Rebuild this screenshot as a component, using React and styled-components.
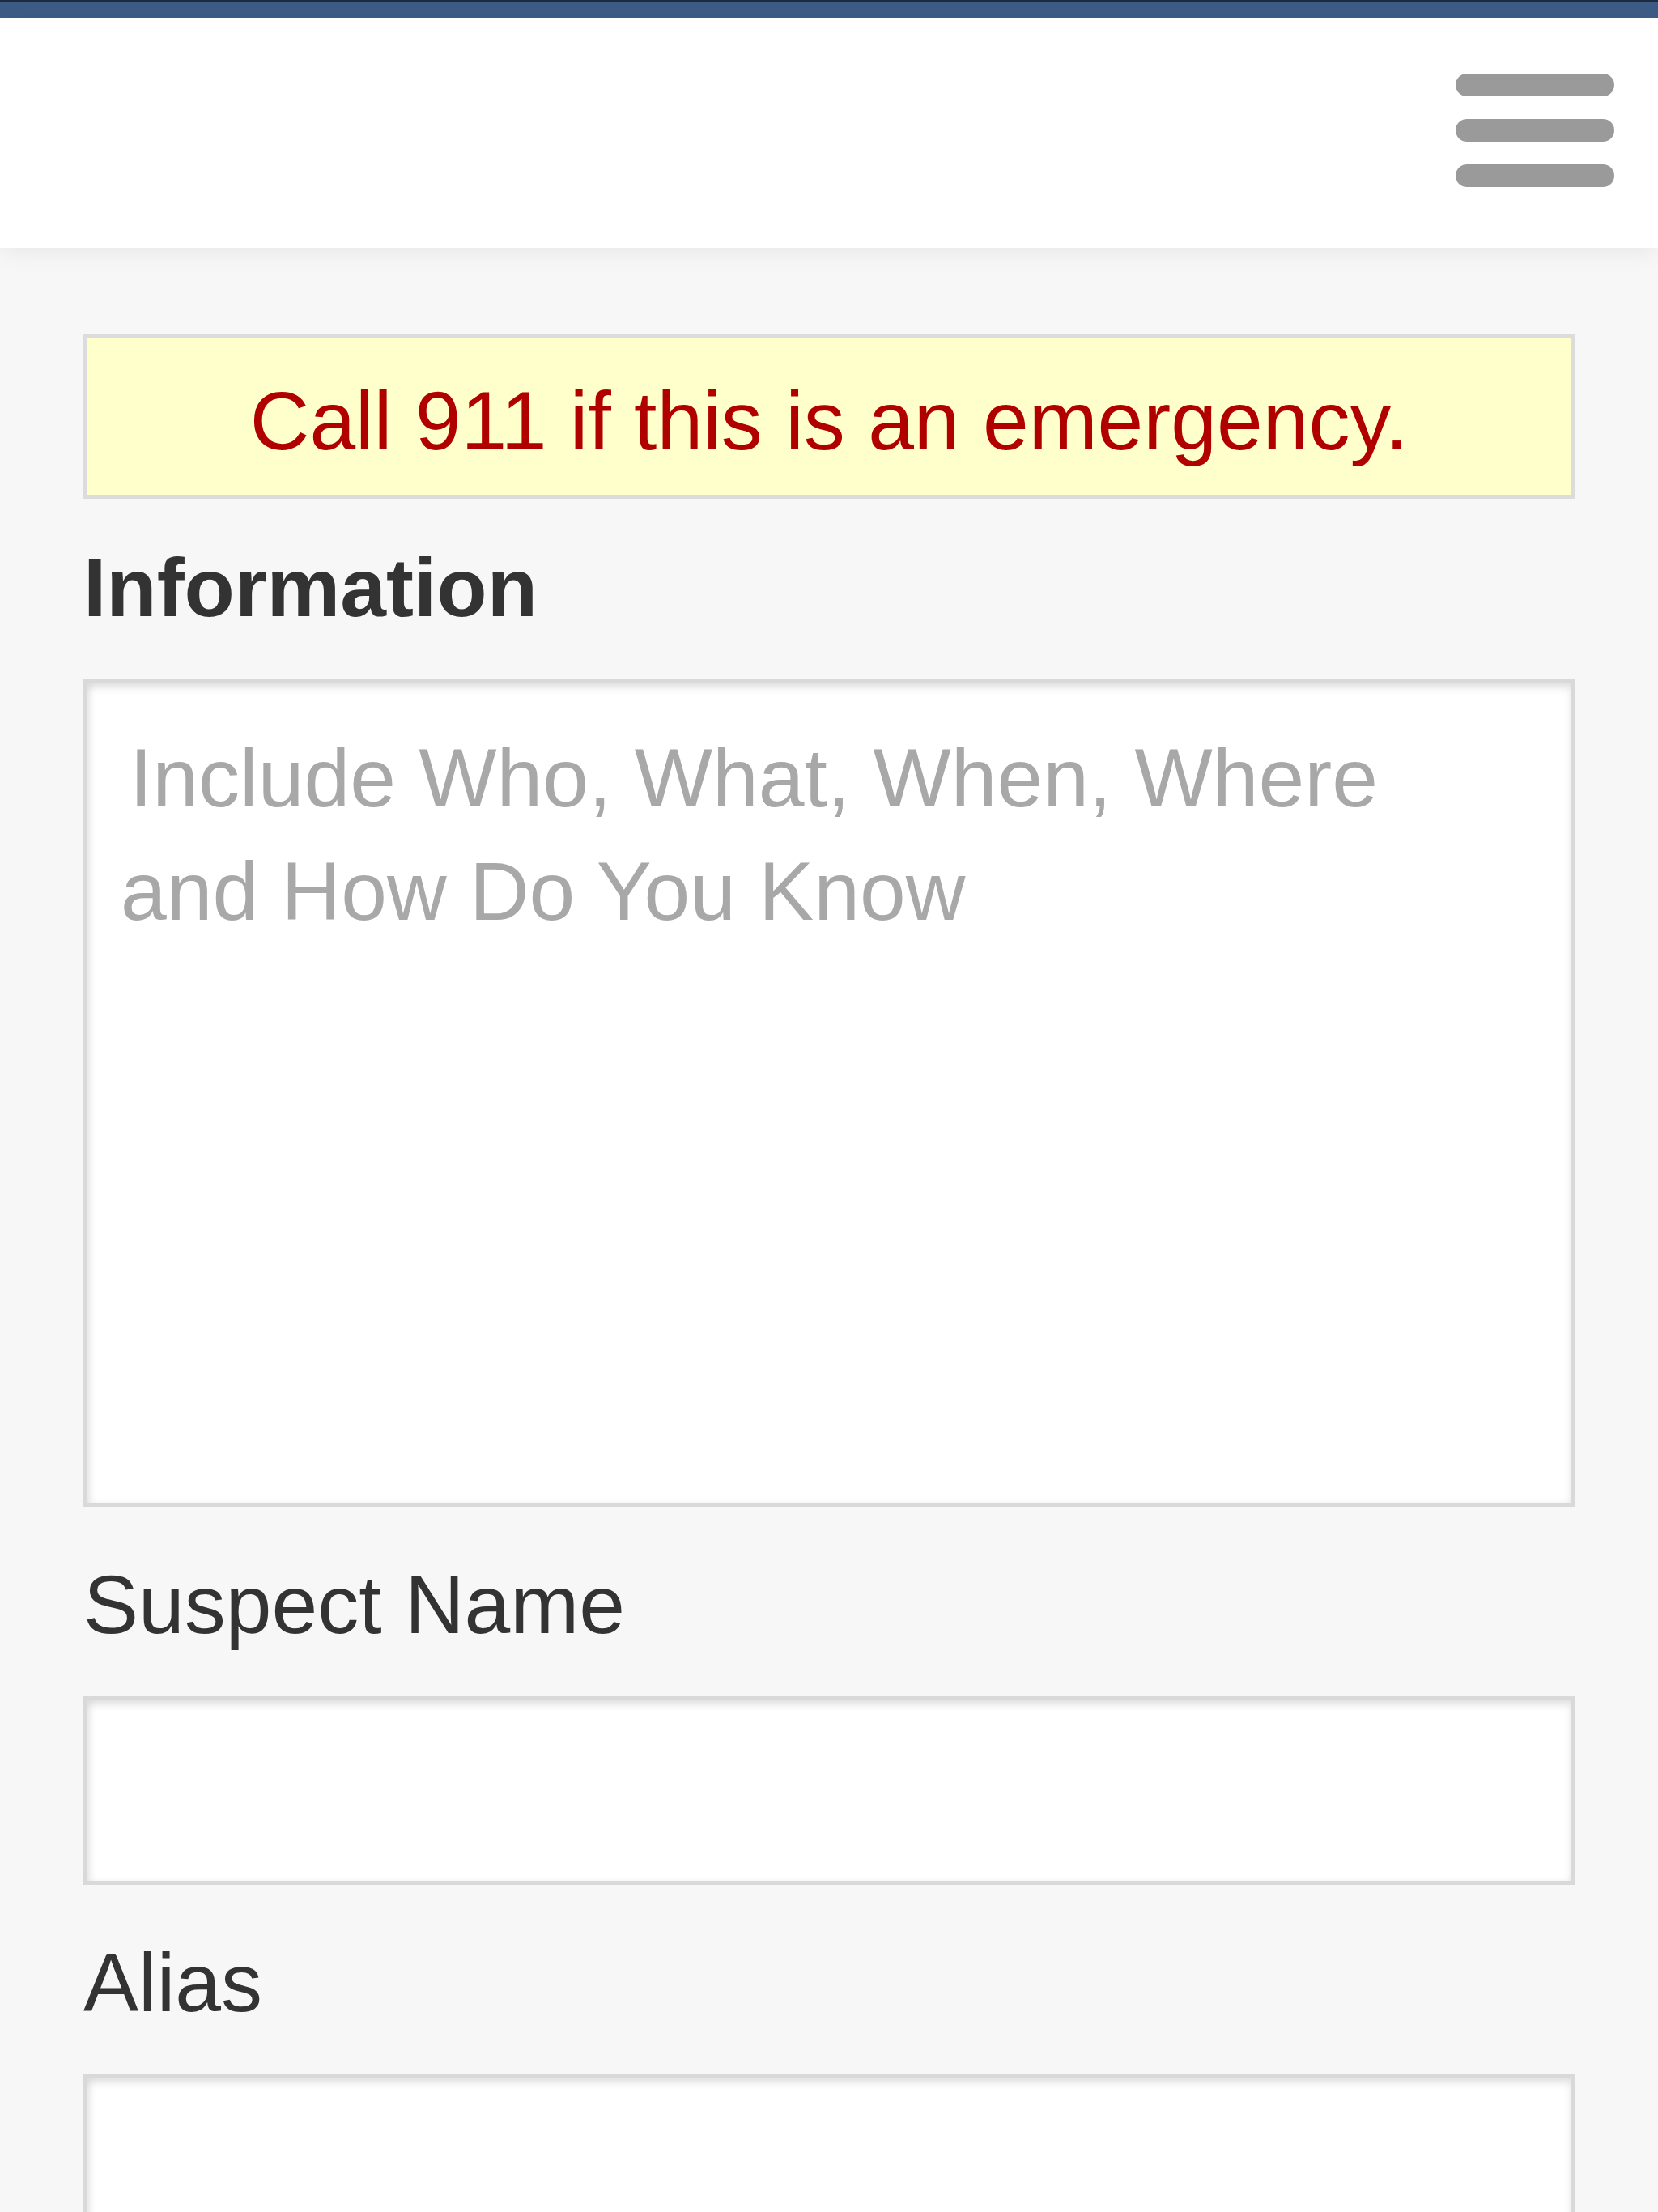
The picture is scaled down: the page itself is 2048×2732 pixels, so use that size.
import React from "react";
import styled, { createGlobalStyle } from "styled-components";

const GlobalStyle = createGlobalStyle`
  html, body {
    margin: 0;
    padding: 0;
    background: #f7f7f7;
    font-family: "Liberation Sans", Arial, Helvetica, sans-serif;
  }
  * {
    box-sizing: border-box;
  }
`;

export default function App() {
  return (
    <>
      <GlobalStyle />
      <TopBar />
      <Header>
        <MenuButton aria-label="Menu">
          <MenuBar />
          <MenuBar />
          <MenuBar />
        </MenuButton>
      </Header>
      <Main>
        <Alert>Call 911 if this is an emergency.</Alert>

        <Field $gap={52}>
          <Label $bold htmlFor="information">Information</Label>
          <TextArea
            id="information"
            placeholder={"Include Who, What, When, Where\nand How Do You Know"}
          />
        </Field>

        <Field>
          <Label htmlFor="suspect">Suspect Name</Label>
          <Input id="suspect" type="text" />
        </Field>

        <Field>
          <Label htmlFor="alias">Alias</Label>
          <Input id="alias" type="text" />
        </Field>
      </Main>
    </>
  );
}

const TopBar = styled.div`
  height: 22px;
  background: #3d5c85;
  border-top: 3px solid #1c2b3f;
`;

const Header = styled.header`
  position: relative;
  z-index: 1;
  height: 284px;
  display: flex;
  justify-content: flex-end;
  align-items: flex-start;
  padding: 69px 54px 0 0;
  background: #fff;
  box-shadow: 0 4px 28px rgba(0, 0, 0, 0.07);
`;

const MenuButton = styled.button`
  display: flex;
  flex-direction: column;
  gap: 28px;
  padding: 0;
  border: none;
  background: transparent;
  cursor: pointer;
`;

const MenuBar = styled.span`
  display: block;
  width: 196px;
  height: 28px;
  border-radius: 14px;
  background: #9a9a9a;
`;

const Main = styled.main`
  padding: 107px 103px 200px;
`;

const Alert = styled.div`
  height: 203px;
  padding-top: 12px;
  border: 5px solid #dcdcdc;
  background: #ffffcc;
  color: #b10000;
  font-size: 102px;
  line-height: 181px;
  text-align: center;
  white-space: nowrap;
`;

const Field = styled.div`
  display: flex;
  flex-direction: column;
  margin-top: ${(p) => (p.$gap ? p.$gap : 63)}px;
`;

const Label = styled.label`
  margin-bottom: 54px;
  color: #333;
  font-size: 102px;
  font-weight: ${(p) => (p.$bold ? 700 : 400)};
  line-height: 117px;
`;

const fieldBox = `
  width: 100%;
  border: 5px solid #d9d9d9;
  border-radius: 0;
  background: #fff;
  box-shadow: inset 0 6px 10px rgba(0, 0, 0, 0.1), inset 5px 0 8px rgba(0, 0, 0, 0.05);
  font-family: "Liberation Sans", Arial, Helvetica, sans-serif;
  font-size: 102px;
  color: #333;
  outline: none;
  -webkit-appearance: none;
  appearance: none;
`;

const TextArea = styled.textarea`
  ${fieldBox}
  display: block;
  height: 1022px;
  padding: 47px 42px 0 41px;
  line-height: 140px;
  text-indent: 11px;
  resize: none;
  overflow: hidden;

  &::placeholder {
    color: #a8a8a8;
  }
`;

const Input = styled.input`
  ${fieldBox}
  display: block;
  height: 233px;
  padding: 0 42px;
`;
